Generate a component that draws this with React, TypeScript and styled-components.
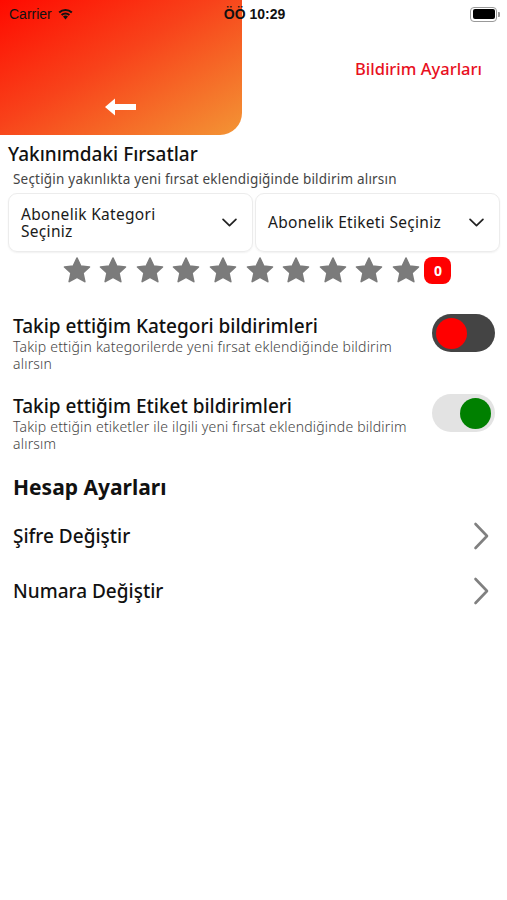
import React from "react";
import styled, { createGlobalStyle } from "styled-components";

const GlobalStyle = createGlobalStyle`
    body {
        margin: 0;
        background: #ffffff;
        font-family: "Noto Sans", "Open Sans", sans-serif;
        color: #111;
    }
`;

const Screen = styled.div`
    width: 507px;
    min-height: 900px;
    display: flex;
    flex-direction: column;
`;

const Header = styled.div`
    position: relative;
    display: flex;
    height: 135px;
`;

const StatusBar = styled.div`
    position: absolute;
    top: 0;
    left: 0;
    right: 0;
    height: 28px;
    display: grid;
    grid-template-columns: 1fr auto 1fr;
    align-items: center;
    padding: 0 7px 0 9px;
    font-family: "Liberation Sans", sans-serif;
    font-size: 14px;
    font-weight: 700;
    color: #111;
`;

const Carrier = styled.div`
    display: flex;
    align-items: center;
    gap: 5px;
    font-weight: 400;
    font-size: 14px;
`;

const Battery = styled.div`
    justify-self: end;
    display: flex;
    align-items: center;
`;

const BatteryBody = styled.div`
    width: 22px;
    height: 10px;
    border: 1.5px solid #999;
    border-radius: 4px;
    padding: 1.5px;
    box-sizing: content-box;

    div {
        width: 100%;
        height: 100%;
        background: #000;
        border-radius: 2px;
    }
`;

const BatteryTip = styled.div`
    width: 2px;
    height: 5px;
    margin-left: 1px;
    background: #999;
    border-radius: 0 1px 1px 0;
`;

const GradientPanel = styled.div`
    width: 242px;
    height: 135px;
    border-bottom-right-radius: 22px;
    background: linear-gradient(150deg, #ff0a00 0%, #f8421a 45%, #f39535 100%);
    display: flex;
    align-items: flex-end;
    justify-content: center;
    padding-bottom: 19px;
    box-sizing: border-box;
`;

const PageTitle = styled.div`
    flex: 1;
    display: flex;
    justify-content: flex-end;
    padding: 57px 25px 0 0;
    font-size: 16.5px;
    font-weight: 500;
    color: #e8101e;
`;

const Content = styled.div`
    display: flex;
    flex-direction: column;
    padding: 6px 7px 0 8px;
`;

const SectionTitle = styled.div`
    font-size: 19px;
    font-weight: 500;
    line-height: 26px;
    color: #111;
`;

const SubText = styled.div`
    font-size: 13.5px;
    letter-spacing: 0.2px;
    color: #444;
    padding-left: 5px;
    line-height: 18px;
    margin-top: 3px;
`;

const SelectRow = styled.div`
    display: flex;
    gap: 2px;
    margin-top: 5px;
`;

const Select = styled.div`
    flex: 1;
    height: 59px;
    box-sizing: border-box;
    display: flex;
    align-items: center;
    justify-content: space-between;
    padding: 0 15px 0 12px;
    border: 1px solid #ececec;
    border-radius: 9px;
    box-shadow: 0 1px 2px rgba(0, 0, 0, 0.06);
    font-size: 15.5px;
    letter-spacing: 0.3px;
    line-height: 17px;
    color: #1a1a1a;
`;

const SelectLabel = styled.span<{ $max: number }>`
    max-width: ${(p) => p.$max}px;
`;

const StarRow = styled.div`
    display: flex;
    align-items: center;
    justify-content: center;
    gap: 8.6px;
    margin-top: 2px;
    padding-left: 6px;
    height: 32px;
`;

const CountBadge = styled.div`
    width: 27px;
    height: 27px;
    border-radius: 8px;
    background: #ff0000;
    color: #fff;
    font-size: 14px;
    font-weight: 700;
    display: flex;
    align-items: center;
    justify-content: center;
    margin-left: -4px;
`;

const ToggleRow = styled.div<{ $mt: number }>`
    display: flex;
    align-items: flex-start;
    justify-content: space-between;
    padding: 0 5px 0 5px;
    margin-top: ${(p) => p.$mt}px;
`;

const ToggleText = styled.div`
    display: flex;
    flex-direction: column;
    max-width: 412px;
`;

const ToggleTitle = styled.div`
    font-size: 19px;
    font-weight: 500;
    line-height: 26px;
    color: #111;
`;

const ToggleDesc = styled.div`
    font-size: 14px;
    letter-spacing: 0.2px;
    line-height: 16.5px;
    color: #444;
    font-weight: 300;
`;

const Switch = styled.div<{ $on: boolean }>`
    width: 63px;
    height: 38px;
    border-radius: 19px;
    background: ${(p) => (p.$on ? "#e3e3e3" : "#444444")};
    display: flex;
    align-items: center;
    justify-content: ${(p) => (p.$on ? "flex-end" : "flex-start")};
    padding: 0 4px;
    box-sizing: border-box;
    margin-top: 1px;
    flex-shrink: 0;
`;

const Knob = styled.div<{ $color: string }>`
    width: 31px;
    height: 31px;
    border-radius: 50%;
    background: ${(p) => p.$color};
`;

const AccountTitle = styled.div`
    font-size: 21px;
    font-weight: 700;
    color: #111;
    padding-left: 5px;
    margin-top: 22px;
    line-height: 26px;
`;

const LinkRow = styled.div`
    display: flex;
    align-items: center;
    justify-content: space-between;
    height: 55px;
    padding: 0 11px 0 5px;
    font-size: 19px;
    font-weight: 500;
    color: #111;
`;

const Star = () => (
    <svg width="28" height="27" viewBox="0 0 24 23">
        <path
            d="M12 0.8l3.2 6.9 7.5.8-5.6 5.1 1.6 7.4L12 17.3 5.3 21l1.6-7.4L1.3 8.5l7.5-.8z"
            fill="#7b7b7b"
            stroke="#7b7b7b"
            strokeWidth="1.4"
            strokeLinejoin="round"
        />
    </svg>
);

const Chevron = () => (
    <svg width="15" height="9" viewBox="0 0 14 8.4">
        <path d="M1 1.2l6 6 6-6" fill="none" stroke="#222" strokeWidth="1.6" strokeLinecap="round" strokeLinejoin="round" />
    </svg>
);

const RightChevron = () => (
    <svg width="16" height="28" viewBox="0 0 16 28">
        <path d="M2.5 2l11.5 12L2.5 26" fill="none" stroke="#808080" strokeWidth="2.6" strokeLinecap="round" strokeLinejoin="round" />
    </svg>
);

const App = () => {
    return (
        <Screen>
            <GlobalStyle />
            <Header>
                <GradientPanel>
                    <svg width="32" height="18" viewBox="0 0 32 18">
                        <path d="M0 9L10 0.5V6H31V12H10V17.5Z" fill="#fff" strokeLinejoin="round" />
                    </svg>
                </GradientPanel>
                <PageTitle>Bildirim Ayarları</PageTitle>
                <StatusBar>
                    <Carrier>
                        Carrier
                        <svg width="17" height="12" viewBox="0 0 17 12">
                            <path d="M8.5 11.5L6 8.6a3.6 3.6 0 0 1 5 0z" fill="#111" />
                            <path d="M3.9 6.3a6.6 6.6 0 0 1 9.2 0l-1.4 1.5a4.6 4.6 0 0 0-6.4 0z" fill="#111" />
                            <path d="M1.5 3.8a10 10 0 0 1 14 0l-1.4 1.5a8 8 0 0 0-11.2 0z" fill="#111" />
                        </svg>
                    </Carrier>
                    <div>ÖÖ 10:29</div>
                    <Battery>
                        <BatteryBody>
                            <div />
                        </BatteryBody>
                        <BatteryTip />
                    </Battery>
                </StatusBar>
            </Header>
            <Content>
                <SectionTitle>Yakınımdaki Fırsatlar</SectionTitle>
                <SubText>Seçtiğin yakınlıkta yeni fırsat eklendigiğinde bildirim alırsın</SubText>
                <SelectRow>
                    <Select>
                        <SelectLabel $max={170}>Abonelik Kategori Seçiniz</SelectLabel>
                        <Chevron />
                    </Select>
                    <Select>
                        <SelectLabel $max={200}>Abonelik Etiketi Seçiniz</SelectLabel>
                        <Chevron />
                    </Select>
                </SelectRow>
                <StarRow>
                    {Array.from({ length: 10 }).map((_, i) => (
                        <Star key={i} />
                    ))}
                    <CountBadge>0</CountBadge>
                </StarRow>
                <ToggleRow $mt={27}>
                    <ToggleText>
                        <ToggleTitle>Takip ettiğim Kategori bildirimleri</ToggleTitle>
                        <ToggleDesc>Takip ettiğin kategorilerde yeni fırsat eklendiğinde bildirim alırsın</ToggleDesc>
                    </ToggleText>
                    <Switch $on={false}>
                        <Knob $color="#ff0000" />
                    </Switch>
                </ToggleRow>
                <ToggleRow $mt={21}>
                    <ToggleText>
                        <ToggleTitle>Takip ettiğim Etiket bildirimleri</ToggleTitle>
                        <ToggleDesc>Takip ettiğin etiketler ile ilgili yeni fırsat eklendiğinde bildirim alırsım</ToggleDesc>
                    </ToggleText>
                    <Switch $on={true}>
                        <Knob $color="#008000" />
                    </Switch>
                </ToggleRow>
                <AccountTitle>Hesap Ayarları</AccountTitle>
                <LinkRow style={{ marginTop: 8 }}>
                    Şifre Değiştir
                    <RightChevron />
                </LinkRow>
                <LinkRow>
                    Numara Değiştir
                    <RightChevron />
                </LinkRow>
            </Content>
        </Screen>
    );
};

export default App;
